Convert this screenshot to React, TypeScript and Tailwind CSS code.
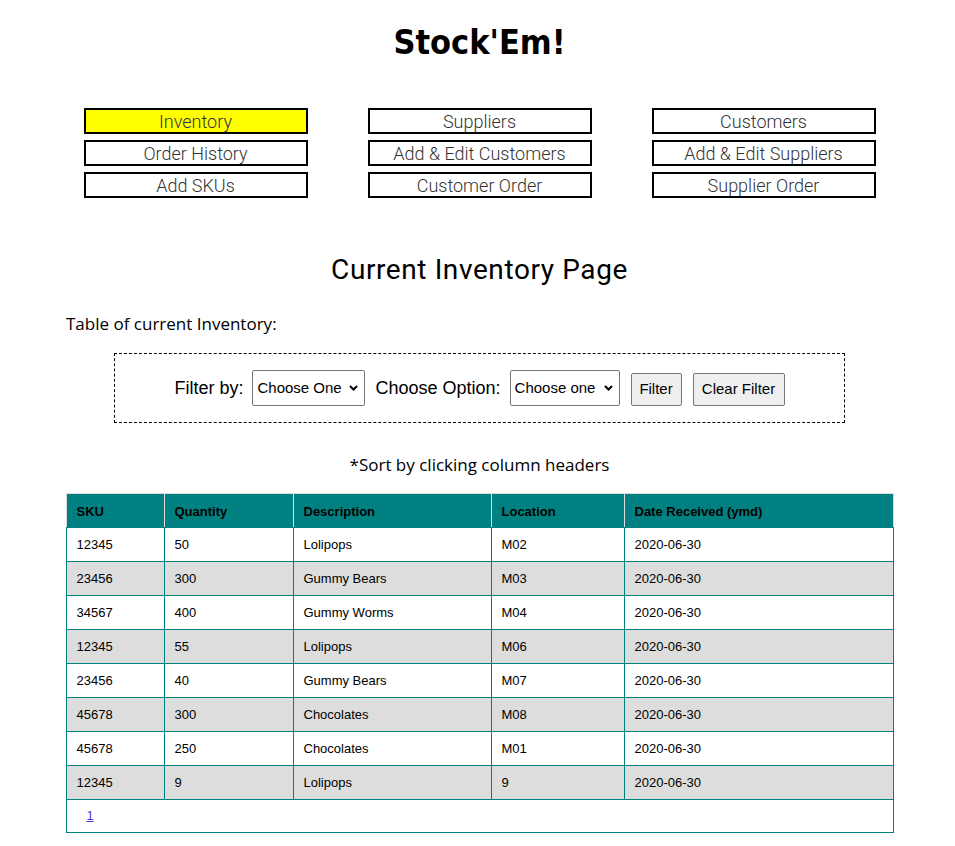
import React from "react";

const navItems = [
  ["Inventory", "Suppliers", "Customers"],
  ["Order History", "Add & Edit Customers", "Add & Edit Suppliers"],
  ["Add SKUs", "Customer Order", "Supplier Order"],
];

const rows = [
  ["12345", "50", "Lolipops", "M02", "2020-06-30"],
  ["23456", "300", "Gummy Bears", "M03", "2020-06-30"],
  ["34567", "400", "Gummy Worms", "M04", "2020-06-30"],
  ["12345", "55", "Lolipops", "M06", "2020-06-30"],
  ["23456", "40", "Gummy Bears", "M07", "2020-06-30"],
  ["45678", "300", "Chocolates", "M08", "2020-06-30"],
  ["45678", "250", "Chocolates", "M01", "2020-06-30"],
  ["12345", "9", "Lolipops", "9", "2020-06-30"],
];

const headers = ["SKU", "Quantity", "Description", "Location", "Date Received (ymd)"];
const widths = ["w-[99px]", "w-[129px]", "w-[198px]", "w-[133px]", "w-[269px]"];

function FakeSelect({ label, w }: { label: string; w: string }) {
  return (
    <div
      className={`${w} h-[36px] border border-[#767676] rounded-[2px] bg-white flex items-center justify-between pl-[4px] pr-[6px] text-[15px] text-black`}
      style={{ fontFamily: "'Liberation Sans', Arial, sans-serif" }}
    >
      <span>{label}</span>
      <svg width="9" height="6" viewBox="0 0 9 6">
        <path d="M1 1 L4.5 4.5 L8 1" fill="none" stroke="#000" strokeWidth="2" />
      </svg>
    </div>
  );
}

export default function App() {
  return (
    <div className="w-full min-h-[846px] bg-white pl-[4px]">
      <div className="flex flex-col items-center">
        <h1
          className="mt-[22px] h-[40px] leading-[40px] text-[34px] font-bold text-black font-stretch-condensed"
          style={{ fontFamily: "'DejaVu Sans Condensed', 'DejaVu Sans', sans-serif" }}
        >
          Stock'Em!
        </h1>

        <div className="mt-[46px] grid grid-cols-[224px_224px_224px] gap-x-[60px] gap-y-[6px]">
          {navItems.flat().map((t, i) => (
            <div
              key={t}
              className={`h-[26px] border-2 border-black flex items-center justify-center text-[18px] font-light text-[#333] ${
                i === 0 ? "bg-[#ffff00]" : "bg-white"
              }`}
              style={{ fontFamily: "Roboto, sans-serif" }}
            >
              {t}
            </div>
          ))}
        </div>

        <h2
          className="mt-[55px] h-[34px] leading-[34px] text-[28px] tracking-[0.6px] text-black"
          style={{ fontFamily: "Roboto, sans-serif" }}
        >
          Current Inventory Page
        </h2>
      </div>

      <div
        className="mt-[25px] ml-[62px] h-[24px] leading-[24px] text-[17px] text-black"
        style={{ fontFamily: "'Open Sans', sans-serif" }}
      >
        Table of current Inventory:
      </div>

      <div className="flex justify-center mt-[17px]">
        <div
          className="w-[731px] h-[70px] border border-dashed border-black flex items-center justify-center text-black"
          style={{ fontFamily: "'Liberation Sans', Arial, sans-serif" }}
        >
          <div className="flex items-center">
            <span className="text-[18px]">Filter by:</span>
            <div className="ml-[9px]">
              <FakeSelect label="Choose One" w="w-[113px]" />
            </div>
            <span className="ml-[10px] text-[18px]">Choose Option:</span>
            <div className="ml-[9px]">
              <FakeSelect label="Choose one" w="w-[110px]" />
            </div>
            <button className="ml-[11px] mt-[3px] h-[33px] w-[51px] bg-[#efefef] border border-[#767676] rounded-[2px] text-[15px] text-black">
              Filter
            </button>
            <button className="ml-[11px] mt-[3px] h-[33px] w-[92px] bg-[#efefef] border border-[#767676] rounded-[2px] text-[15px] text-black">
              Clear Filter
            </button>
          </div>
        </div>
      </div>

      <div
        className="mt-[29px] h-[26px] leading-[26px] text-center text-[17px] text-black"
        style={{ fontFamily: "'Open Sans', sans-serif" }}
      >
        *Sort by clicking column headers
      </div>

      <div className="flex justify-center mt-[15px]">
        <table
          className="border-separate border-spacing-0 w-[828px] text-[13px] text-black"
          style={{ fontFamily: "'Liberation Sans', Arial, sans-serif" }}
        >
          <thead>
            <tr className="bg-[#008080]">
              {headers.map((h, i) => (
                <th
                  key={h}
                  className={`${widths[i]} h-[34px] border-t border-r border-[#dddddd] ${
                    i === 0 ? "border-l" : ""
                  } text-left font-bold pl-[10px] pt-[2px]`}
                >
                  {h}
                </th>
              ))}
            </tr>
          </thead>
          <tbody>
            {rows.map((r, ri) => (
              <tr key={ri} className={ri % 2 === 1 ? "bg-[#dddddd]" : "bg-white"}>
                {r.map((c, ci) => (
                  <td
                    key={ci}
                    className={`h-[34px] border-t border-r border-[#008080] ${
                      ci === 0 ? "border-l" : ""
                    } pl-[10px] pt-[1px]`}
                  >
                    {c}
                  </td>
                ))}
              </tr>
            ))}
            <tr className="bg-white">
              <td colSpan={5} className="h-[34px] border border-[#008080] pl-[20px]">
                <a href="#" className="underline text-[#4c3bd6]">
                  1
                </a>
              </td>
            </tr>
          </tbody>
        </table>
      </div>
    </div>
  );
}
